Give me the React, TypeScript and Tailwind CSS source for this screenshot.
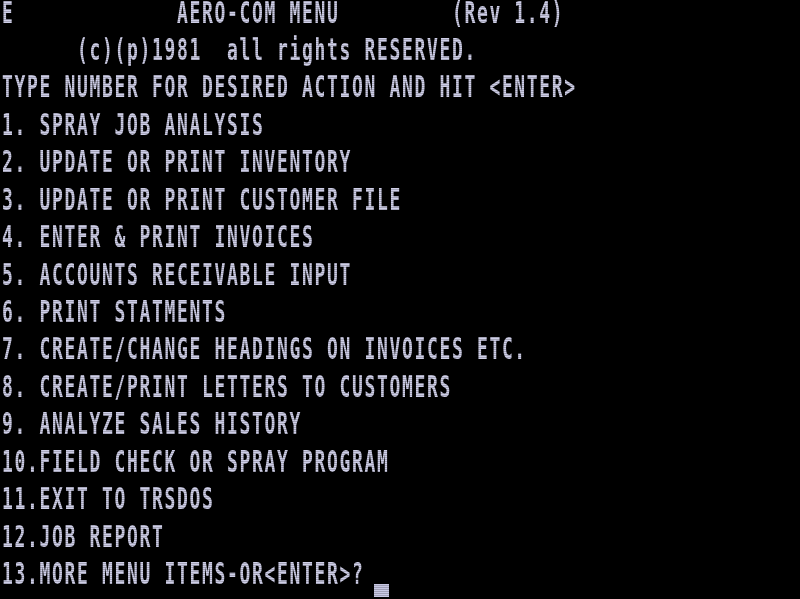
import React from "react";

// 64 x 16 character screen, each cell 12.5 x 37.44 px
const rows: string[] = [
  "E             AERO-COM MENU         (Rev 1.4)",
  "      (c)(p)1981  all rights RESERVED.",
  "TYPE NUMBER FOR DESIRED ACTION AND HIT <ENTER>",
  "1. SPRAY JOB ANALYSIS",
  "2. UPDATE OR PRINT INVENTORY",
  "3. UPDATE OR PRINT CUSTOMER FILE",
  "4. ENTER & PRINT INVOICES",
  "5. ACCOUNTS RECEIVABLE INPUT",
  "6. PRINT STATMENTS",
  "7. CREATE/CHANGE HEADINGS ON INVOICES ETC.",
  "8. CREATE/PRINT LETTERS TO CUSTOMERS",
  "9. ANALYZE SALES HISTORY",
  "10.FIELD CHECK OR SPRAY PROGRAM",
  "11.EXIT TO TRSDOS",
  "12.JOB REPORT",
  "13.MORE MENU ITEMS-OR<ENTER>?",
];

const Row = ({ text, cursor }: { text: string; cursor?: boolean }) => (
  <div className="relative h-[37.44px] pl-[2px] pt-[0.5px]">
    <div className="origin-top scale-y-[1.68] whitespace-pre text-[18px] font-bold leading-[14px] tracking-[1.66px] text-[#cfcfe8] blur-[0.3px]">
      {text}
    </div>
    {cursor && (
      <div className="absolute left-[374px] top-[22px] h-[13px] w-[15px] bg-[#c8c8e4] blur-[0.4px]" />
    )}
  </div>
);

export default function App() {
  return (
    <div
      className="relative h-[599px] w-[800px] overflow-hidden bg-black"
      style={{ fontFamily: '"DejaVu Sans Mono", "Liberation Mono", monospace' }}
    >
      {rows.map((r, i) => (
        <Row key={i} text={r} cursor={i === rows.length - 1} />
      ))}
      {/* scanlines */}
      <div className="pointer-events-none absolute inset-0 bg-[repeating-linear-gradient(to_bottom,transparent_0px,transparent_1px,rgba(0,0,0,0.2)_1px,rgba(0,0,0,0.2)_2px)]" />
    </div>
  );
}
